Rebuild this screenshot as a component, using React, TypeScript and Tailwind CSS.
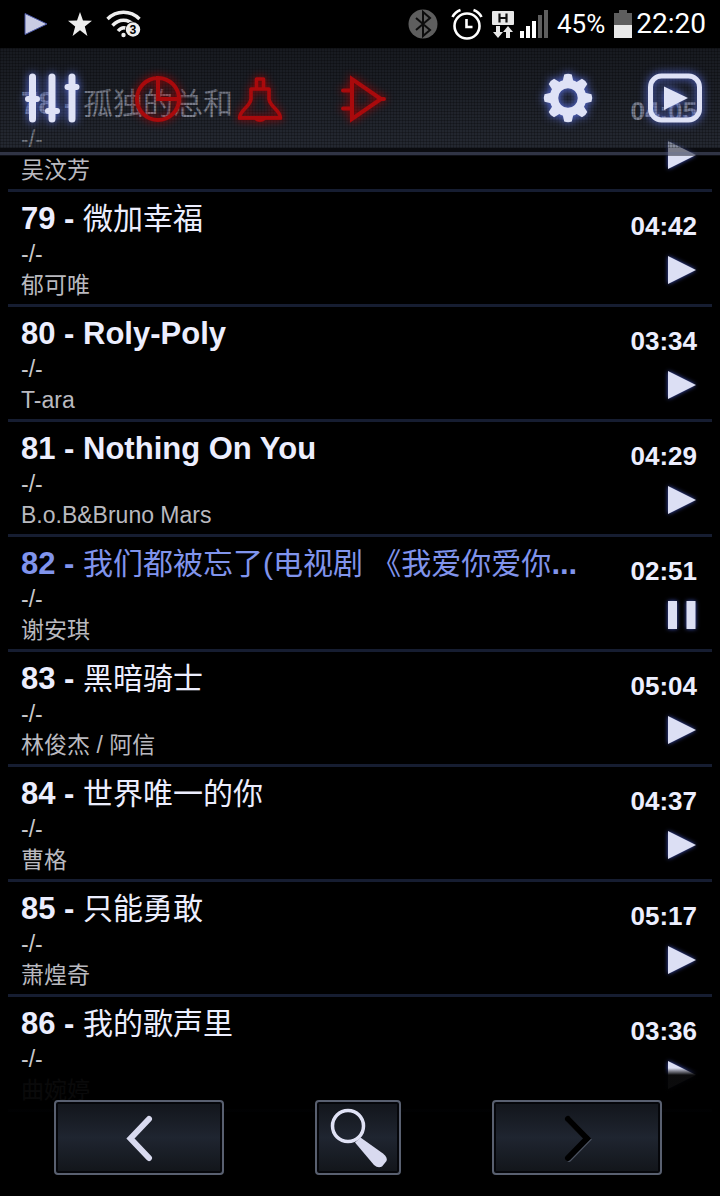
import type { ReactNode } from "react";

type Track = {
  no: number;
  title: string;
  artist: string;
  time: string;
  latin?: boolean;
  playing?: boolean;
};

const TRACKS: Track[] = [
  { no: 78, title: "孤独的总和", artist: "吴汶芳", time: "04:05" },
  { no: 79, title: "微加幸福", artist: "郁可唯", time: "04:42" },
  { no: 80, title: "Roly-Poly", artist: "T-ara", time: "03:34", latin: true },
  { no: 81, title: "Nothing On You", artist: "B.o.B&Bruno Mars", time: "04:29", latin: true },
  { no: 82, title: "我们都被忘了(电视剧 《我爱你爱你", artist: "谢安琪", time: "02:51", playing: true },
  { no: 83, title: "黑暗骑士", artist: "林俊杰 / 阿信", time: "05:04" },
  { no: 84, title: "世界唯一的你", artist: "曹格", time: "04:37" },
  { no: 85, title: "只能勇敢", artist: "萧煌奇", time: "05:17" },
  { no: 86, title: "我的歌声里", artist: "曲婉婷", time: "03:36" },
];

const GLOW = "overflow-visible drop-shadow-[0_0_5px_#5f76f0]";
const RED_GLOW = "overflow-visible drop-shadow-[0_0_4px_#a00000]";

const StatusBar = () => (
  <div className="relative z-20 flex h-12 items-center justify-between bg-black pl-6 pr-3.5 font-['Roboto',sans-serif] text-[26px] text-white">
    <div className="flex items-center">
      <svg className="h-6 w-6" viewBox="0 0 24 24">
        <path d="M1 1.5 23 12 1 22.5Z" fill="#c9cce4" stroke="#4653a0" strokeWidth="1" />
      </svg>
      <svg className="ml-5 h-6 w-6" viewBox="0 0 24 24">
        <path d="m12 0 3 8.600 9 .2-7.200 5.600L19.400 24 12 18.200 4.600 24l2.600-9.600L0 8.800l9-.2Z" fill="#eee" />
      </svg>
      <svg className="ml-3.5 h-7 w-9" viewBox="0 0 36 28">
        <g fill="none" stroke="#eee" strokeWidth="3.4">
          <path d="M1.500 9c9-9 23-9 32 0" />
          <path d="M6.500 15.500c6.500-7 15.500-7 22 0" />
          <path d="M12 21c3-3.500 6-4 9-2.500" />
        </g>
        <circle cx="17.500" cy="25" r="2.200" fill="#eee" />
        <circle cx="27" cy="19.500" r="8" fill="#000" />
        <circle cx="27" cy="19.500" r="7.200" fill="#eee" />
        <text x="27" y="24" fontSize="12" fontWeight="700" textAnchor="middle" fill="#000">
          3
        </text>
      </svg>
    </div>

    <div className="flex items-center">
      <svg className="mr-3 h-8 w-8" viewBox="0 0 32 32">
        <circle cx="16" cy="16" r="14.500" fill="#5e5e5e" />
        <path d="m9 10 14 12-7 6V4l7 6L9 22" fill="none" stroke="#0c0c0c" strokeWidth="2" />
      </svg>
      <svg className="mr-2 h-8 w-8" viewBox="0 0 32 32">
        <g fill="none" stroke="#fff" strokeWidth="2.600">
          <circle cx="16" cy="18" r="12.500" />
          <path d="M15.500 11v8h6M1.500 9a14 14 0 0 1 8-7M30.500 9a14 14 0 0 0-8-7" />
        </g>
      </svg>
      <svg className="mr-1 h-8 w-6" viewBox="0 0 24 32">
        <rect x="1" y="3" width="22" height="14" rx="1" fill="#e8e8e8" />
        <path d="M8.500 5.500v9M15.500 5.500v9M8.500 10h7" stroke="#111" strokeWidth="2.200" />
        <path d="M5 18h4v6h3l-5 6-5-6h3ZM15 30h4v-6h3l-5-6-5 6h3Z" fill="#e8e8e8" />
      </svg>
      <svg className="mr-2 h-8 w-[30px]" viewBox="0 0 30 32">
        <path d="M1 23h4v7H1ZM7 18h4v12H7ZM13 13h4v17h-4Z" fill="#fff" />
        <path d="M19 7h4v23h-4ZM25 2h4v28h-4Z" fill="#5e5e5e" />
      </svg>
      <span className="mr-2">45%</span>
      <svg className="mr-[3px] h-8 w-5" viewBox="0 0 20 32">
        <path d="M6 2h8v3h5v12H1V5h5Z" fill="#5e5e5e" />
        <path d="M1 17h18v13H1Z" fill="#e8e8e8" />
      </svg>
      <span className="text-[28px]">22:20</span>
    </div>
  </div>
);

const ToolButton = ({ label, className, children }: { label: string; className?: string; children: ReactNode }) => (
  <button type="button" aria-label={label} className={className}>
    {children}
  </button>
);

const Toolbar = () => (
  <header className="relative z-10 flex h-[108px] flex-col">
    <div className="flex flex-1 items-center bg-[#414959]/55 bg-[linear-gradient(to_bottom,rgba(0,0,0,0.35),transparent),repeating-linear-gradient(to_right,rgba(0,0,0,0.22)_0_1px,transparent_1px_3px),repeating-linear-gradient(to_bottom,rgba(0,0,0,0.25)_0_1px,transparent_1px_3px)] pl-5 pr-4">
      <ToolButton label="Equalizer">
        <svg className={`h-16 w-16 ${GLOW}`} viewBox="0 0 64 64">
          <g stroke="#dfe2f6" strokeLinecap="round">
            <path d="M12.500 11v42M32 11v42M52 11v42" strokeWidth="7" />
            <path d="M8 33h9M28 45h9M47.500 21h9" strokeWidth="6" />
          </g>
        </svg>
      </ToolButton>
      <ToolButton label="Sleep timer" className="ml-12">
        <svg className={`h-[52px] w-[52px] ${RED_GLOW}`} viewBox="0 0 52 52">
          <path d="M26 6a21 21 0 1 0 0 42 21 21 0 0 0 0-42v21h21" fill="none" stroke="#a90a0c" strokeWidth="4" />
        </svg>
      </ToolButton>
      <ToolButton label="Reminder" className="ml-[50px]">
        <svg className={`h-[52px] w-[52px] ${RED_GLOW}`} viewBox="0 0 52 52">
          <path
            d="M22.500 16V7h7v9M17 17h18v10c1 8 11 11 11.500 19H5.500C6 38 16 35 17 27Z"
            fill="none"
            stroke="#a90a0c"
            strokeWidth="3.600"
            strokeLinejoin="round"
          />
          <path d="M4 44h44v3.500H32q-6 5-12 0H4Z" fill="#a90a0c" />
        </svg>
      </ToolButton>
      <ToolButton label="Amplifier" className="ml-[50px]">
        <svg className={`h-[52px] w-[52px] ${RED_GLOW}`} viewBox="0 0 52 52">
          <path d="M16 7v40l29-20ZM7 18.500h8M7 36.500h8M44 27h4" fill="none" stroke="#a90a0c" strokeWidth="4" strokeLinecap="round" />
        </svg>
      </ToolButton>
      <ToolButton label="Settings" className="ml-auto">
        <svg className={`h-[52px] w-[52px] ${GLOW}`} viewBox="-26 -26 52 52">
          <circle r="14" fill="none" stroke="#dfe2f6" strokeWidth="8.500" />
          <g fill="#dfe2f6">
            {[0, 45, 90, 135, 180, 225, 270, 315].map((a) => (
              <path key={a} d="M-5.500-16-3.800-23.500Q0-25 3.800-23.500L5.500-16Z" transform={`rotate(${a})`} />
            ))}
          </g>
        </svg>
      </ToolButton>
      <ToolButton label="Now playing" className="ml-[52px]">
        <svg className={`h-[52px] w-[58px] ${GLOW}`} viewBox="0 0 58 52">
          <rect x="4.500" y="4" width="49" height="44" rx="11" fill="none" stroke="#dfe2f6" strokeWidth="5" />
          <path d="M18 14.500 42 26 18 38Z" fill="#dfe2f6" />
        </svg>
      </ToolButton>
    </div>
    <div className="flex flex-col">
      <div className="h-1 bg-[#14161d]/50" />
      <div className="h-[3px] bg-[#444a62]/70" />
      <div className="h-px bg-[#1b1e2a]/50" />
    </div>
  </header>
);

const TrackRow = ({ track }: { track: Track }) => (
  <li className="mx-2 flex justify-between border-b-[3px] border-[#161d31] pb-[3px] pl-[13px] pr-[15px]">
    <div className="min-w-0 pt-[7px]">
      <p
        className={`whitespace-nowrap text-[31px] leading-10 font-bold ${track.playing ? "text-[#8094ec]" : "text-[#eceefe]"}`}
      >
        {track.no} - <span className={track.latin ? "font-bold" : "text-[30px] font-normal"}>{track.title}</span>
        {track.playing && "..."}
      </p>
      <p className="text-[23px] leading-[31px] text-[#c8c8cc]">-/-</p>
      <p className="text-[23px] leading-[31px] text-[#b9b9bf]">{track.artist}</p>
    </div>

    <div className="flex flex-col items-end pt-[18px]">
      <span className="text-[26px] leading-8 font-bold text-[#eceefe]">{track.time}</span>
      <button type="button" aria-label={track.playing ? "Pause" : "Play"} className="mt-3.5">
        <svg className="h-7 w-[30px] overflow-visible drop-shadow-[0_0_2px_#4456c0]" viewBox="0 0 30 28">
          {track.playing ? (
            <path d="M1 0h9v28H1ZM19.500 0h9v28h-9Z" fill="#dcdff4" />
          ) : (
            <path d="M1 0 29 14 1 28Z" fill="#dcdff4" />
          )}
        </svg>
      </button>
    </div>
  </li>
);

const PANEL =
  "flex h-[75px] items-center justify-center rounded-[4px] border-2 border-[#596070] bg-linear-to-b from-[#12151b] via-[#1f2530] to-[#12151a] shadow-[inset_0_0_0_2px_#05060a]";

const BottomBar = () => (
  <nav className="relative z-10 -mt-11 flex items-start justify-between bg-[linear-gradient(to_bottom,transparent,rgba(0,0,0,0.95)_7px)] pt-8 pr-[58px] pb-5 pl-[54px]">
    <button type="button" aria-label="Previous page" className={`${PANEL} w-[170px]`}>
      <svg className="h-12 w-8" viewBox="0 0 32 48">
        <path d="M26 5 7.500 24.500 26 44" fill="none" stroke="#d8daef" strokeWidth="6" strokeLinecap="round" />
      </svg>
    </button>
    <button type="button" aria-label="Search" className={`${PANEL} w-[86px]`}>
      <svg className="h-[62px] w-[62px]" viewBox="0 0 62 62">
        <circle cx="21" cy="19" r="15.500" fill="none" stroke="#e0e2f5" strokeWidth="3.500" />
        <path d="M28 35.500 33.500 30.500 56 46.500Q61 50.500 59.500 54L55 59.500Q51 61.500 47 58Z" fill="#d8daef" />
      </svg>
    </button>
    <button type="button" aria-label="Next page" className={`${PANEL} w-[170px]`}>
      <svg className="h-12 w-8" viewBox="0 0 32 48">
        <path d="M8 6 27 25.500 8 45" fill="none" stroke="#4c5361" strokeWidth="5.500" strokeLinecap="round" />
        <path d="M7 5 26 24.500 7 44" fill="none" stroke="#000" strokeWidth="6" strokeLinecap="round" />
      </svg>
    </button>
  </nav>
);

export default function App() {
  return (
    <div className="min-h-screen bg-black font-['Liberation_Sans','Noto_Sans_CJK_SC',sans-serif]">
      <StatusBar />
      <Toolbar />
      <ul className="-mt-[79px]">
        {TRACKS.map((track) => (
          <TrackRow key={track.no} track={track} />
        ))}
      </ul>
      <BottomBar />
    </div>
  );
}
